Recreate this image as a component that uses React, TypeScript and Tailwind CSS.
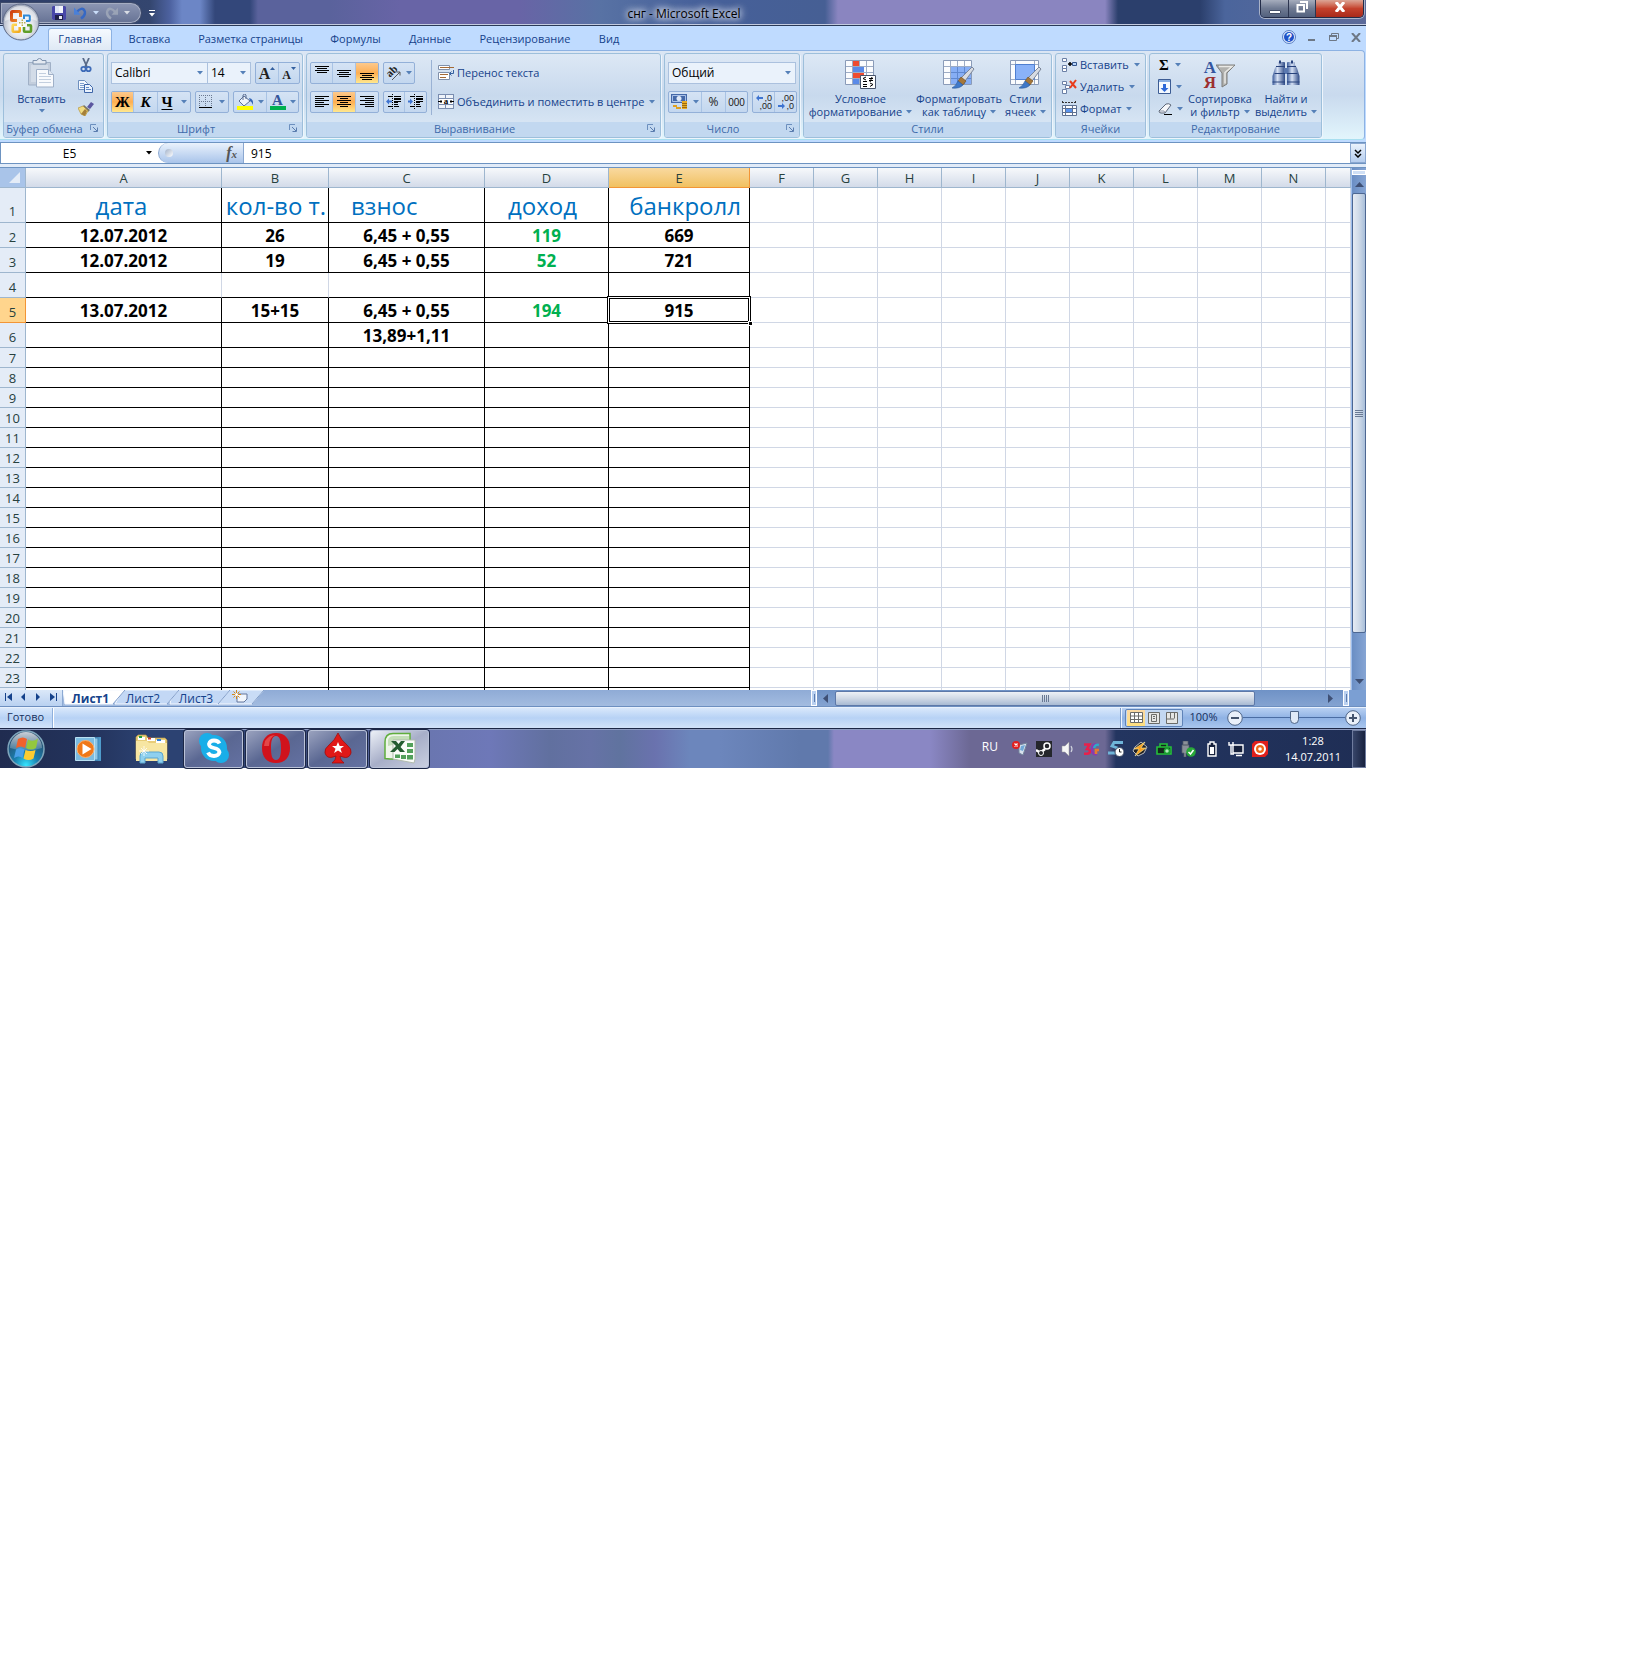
import React from "react";
import type { ReactNode } from "react";

const Arrow = ({ color = "#5580b8" }: { color?: string }) => (
  <svg width="6" height="4" viewBox="0 0 6 4" className="shrink-0" aria-hidden="true">
    <path d="M0 0h6L3 3.5z" fill={color} />
  </svg>
);

/* ---------- ribbon drawings ---------- */

const LogoIcon = () => (
  <svg width="38" height="38" viewBox="0 0 38 38" aria-hidden="true">
    <defs>
      <radialGradient id="orb" cx="50%" cy="60%" r="55%">
        <stop offset="0" stopColor="#ffffff" />
        <stop offset="0.6" stopColor="#e3e6ec" />
        <stop offset="1" stopColor="#a4acbd" />
      </radialGradient>
      <linearGradient id="lgR" gradientUnits="userSpaceOnUse" x1="8" y1="7" x2="20" y2="19">
        <stop offset="0" stopColor="#c8300a" />
        <stop offset="1" stopColor="#f8a030" />
      </linearGradient>
      <linearGradient id="lgY" gradientUnits="userSpaceOnUse" x1="10" y1="21" x2="19" y2="30">
        <stop offset="0" stopColor="#ffdf60" />
        <stop offset="1" stopColor="#f0a010" />
      </linearGradient>
    </defs>
    <circle cx="19" cy="19" r="18" fill="url(#orb)" stroke="#5f6b88" />
    <path d="M3 18a16 15 0 0 1 32 0c-8-4-24-4-32 0z" fill="#fff" opacity=".5" />
    <path d="M15 17.500h-4.500q-1 0-1-1V9.500q0-1 1-1h7q1 0 1 1V14" fill="none" stroke="url(#lgR)" strokeWidth="3" />
    <path d="M22 16v-3.500h5q.8 0 .8.800v3.900q0 .8-.8.800h-3" fill="none" stroke="#2e8ad8" strokeWidth="2" />
    <path d="M15 21.800h-3.500q-.8 0-.8.800v5.400q0 .8.800.8h5.400q.8 0 .8-.8V24" fill="none" stroke="url(#lgY)" strokeWidth="2.600" />
    <path d="M22 24v4q0 .8.800.8h5.400q.8 0 .8-.8v-5q0-.8-.8-.8H25" fill="none" stroke="#5f9e28" strokeWidth="2.600" />
    <path d="M17 19.700h7M20.300 16.500v7" stroke="#b8b050" strokeWidth="1.500" strokeDasharray="1.500 1" />
  </svg>
);

const SaveIcon = () => (
  <svg width="14" height="14" viewBox="0 0 14 14" aria-hidden="true">
    <path d="M0 1l1-1h12l1 1v12l-1 1H1.500L0 12.500z" fill="#4746a8" />
    <path d="M3 0h8v7H3z" fill="#f1f3fb" />
    <path d="M3 0h4v7H3z" fill="#dfe5f6" />
    <path d="M3 9h8v5H3z" fill="#20204a" />
    <path d="M7 10h3v3H7z" fill="#e9ecf5" />
  </svg>
);

const UndoIcon = ({ flip = false }: { flip?: boolean }) => (
  <svg width="13" height="14" viewBox="0 0 14 14" aria-hidden="true">
    <g transform={flip ? "translate(14 0) scale(-1 1)" : undefined}>
      <path d="M3 6C6 2 10 1 11.500 5c1 3-1 6-4 8" fill="none" stroke={flip ? "#9aa3b6" : "#3668c4"} strokeWidth="2.600" />
      <path d="M0 1v8h7z" fill={flip ? "#9aa3b6" : "#4a80d8"} />
    </g>
  </svg>
);

const PasteIcon = () => (
  <svg width="28" height="30" viewBox="0 0 28 30" aria-hidden="true">
    <path d="M.5 4.500h22V27H.5z" fill="#c3cedd" stroke="#a0b0c6" />
    <path d="M3 7h17v17H3z" fill="#d3dce8" />
    <path d="M5 2.500h4Q9.500.5 11.500.5t2.500 2h4V6H5z" fill="#e3e9f1" stroke="#7f93ae" />
    <path d="M8.500 11.500h12l5 5v12.500h-17z" fill="#f8fafd" stroke="#9fb0c8" />
    <path d="M20.500 11.500v5h5" fill="#dfe7f1" stroke="#9fb0c8" />
    <path d="M11 15.500h7M11 18.500h12M11 21.500h12M11 24.500h12" stroke="#c3cfdf" />
  </svg>
);

const CutIcon = () => (
  <svg width="14" height="15" viewBox="0 0 14 15" aria-hidden="true">
    <path d="M4 0l4 9M10 0L6 9" stroke="#5a6b88" strokeWidth="1.800" />
    <circle cx="4.500" cy="11" r="2.200" fill="none" stroke="#3f6cb8" strokeWidth="1.800" />
    <circle cx="9.500" cy="11" r="2.200" fill="none" stroke="#3f6cb8" strokeWidth="1.800" />
  </svg>
);

const CopyIcon = () => (
  <svg width="16" height="14" viewBox="0 0 16 14" aria-hidden="true">
    <path d="M.5.5h6l3 3v6h-9z" fill="#f4f8fe" stroke="#6d8fbe" />
    <path d="M2 3.500h4M2 5.500h6M2 7.500h6" stroke="#7ea0cf" />
    <path d="M6.500 4.500h5l3 3v5h-8z" fill="#eaf2fd" stroke="#3f66a8" />
    <path d="M8 7.500h3M8 9.500h5" stroke="#5f88c4" />
  </svg>
);

const BrushIcon = () => (
  <svg width="16" height="14" viewBox="0 0 16 14" aria-hidden="true">
    <path d="M9 5l4-5 3 2-4 5z" fill="#5b57a0" />
    <path d="M6 3l6 5-2 2-6-5z" fill="#77756c" />
    <path d="M0 6l5-2 5 5-3 5-4-2z" fill="#f0dc82" stroke="#b8953a" strokeWidth=".7" />
    <path d="M3 12l4-5 2 2-2 5z" fill="#a5803a" />
  </svg>
);

const Lines = ({ rows, y, step = 2 }: { rows: [number, number][]; y: number; step?: number }) => (
  <svg width="16" height="16" viewBox="0 0 16 16" aria-hidden="true">
    {rows.map(([x, w], i) => (
      <rect key={i} x={x} y={y + i * step} width={w} height="1" fill="#000" />
    ))}
  </svg>
);
const wide: [number, number][] = [[1, 14], [3, 10], [1, 14], [3, 10]];
const left: [number, number][] = [[1, 14], [1, 9], [1, 14], [1, 9], [1, 14], [1, 9]];
const center: [number, number][] = [[1, 14], [4, 8], [1, 14], [4, 8], [1, 14], [4, 8]];
const right: [number, number][] = [[1, 14], [6, 9], [1, 14], [6, 9], [1, 14], [6, 9]];

const IndentIcon = ({ out = false }: { out?: boolean }) => (
  <svg width="16" height="16" viewBox="0 0 16 16" aria-hidden="true">
    <path d="M2 2.500h4M8 2.500h7M8 4.500h7M8 7.500h7M8 10.500h4M2 12.500h4M8 12.500h5" stroke="#000" />
    <path d="M8 5.500h7M8 8.500h4" stroke="#000" />
    <path d="M6.500 0v16" stroke="#000" strokeDasharray="1 1" />
    {out ? <path d="M0 7.500l3-3v2h3v2H3v2z" fill="#3f74d0" /> : <path d="M5 7.500l-3-3v2H0v2h2v2z" fill="#3f74d0" />}
  </svg>
);

const OrientationIcon = () => (
  <svg width="16" height="16" viewBox="0 0 16 16" className="overflow-visible" aria-hidden="true">
    <text x="2" y="12" transform="rotate(-45 4 10)" fontFamily="Liberation Serif" fontSize="11" fontWeight="700" fill="#222">ab</text>
    <path d="M6 15L14 7M14 7h-3.500M14 7v3.500" stroke="#555" fill="none" />
  </svg>
);

const BordersIcon = () => (
  <svg width="14" height="14" viewBox="0 0 14 14" aria-hidden="true">
    <path d="M.5 0v12M6.500 0v12M12.500 0v12M0 .5h13M0 6.500h13" stroke="#6a7890" strokeDasharray="1 1" />
    <path d="M0 12.500h13" stroke="#000" />
  </svg>
);

const FillIcon = () => (
  <svg width="17" height="16" viewBox="0 0 17 16" aria-hidden="true">
    <path d="M7 2l6 5-6 5-5-5z" fill="#eef3fb" stroke="#5b6f92" />
    <path d="M6 6V1q2-2 3 0v4" fill="none" stroke="#5b6f92" />
    <path d="M12 4q5 1 4 7-1-3-3-4z" fill="#3668b8" />
    <path d="M0 12h16v4H0z" fill="#ffff00" />
  </svg>
);

const FontColorIcon = () => (
  <span className="flex h-4 w-4 flex-col items-center justify-end">
    <span className="font-['Liberation_Serif'] text-[15px] font-bold leading-3 text-[#34559a]">A</span>
    <span className="h-1 w-4 bg-[#00b050]" />
  </span>
);

const WrapIcon = () => (
  <svg width="16" height="16" viewBox="0 0 16 16" aria-hidden="true">
    <path d="M.5.5h11v4H.5zM.5 7.500h11v7H.5z" fill="#fff" stroke="#8090aa" />
    <path d="M2 2.500h14M2 9.500h8M2 12.500h6" stroke="#a56a35" />
    <path d="M15.500 5v3.500H12M13.500 6.500l-2 2 2 2" fill="none" stroke="#34609f" />
  </svg>
);

const MergeIcon = () => (
  <svg width="16" height="16" viewBox="0 0 16 16" aria-hidden="true">
    <path d="M0 0h16v15H0z" fill="#7a8db0" />
    <path d="M1 1h6v3H1zM8 1h7v3H8zM1 11h6v3H1zM8 11h7v3H8z" fill="#eef3fa" />
    <path d="M1 5h14v5H1z" fill="#fff" />
    <path d="M0 7.500h4M16 7.500h-4M3 6v3M13 6v3" stroke="#000" />
    <text x="8" y="10" textAnchor="middle" fontFamily="Liberation Serif" fontSize="9" fontWeight="700">a</text>
  </svg>
);

const MoneyIcon = () => (
  <svg width="17" height="16" viewBox="0 0 17 16" aria-hidden="true">
    <path d="M0 0h16v9H0z" fill="#4468a8" />
    <path d="M1.500 1.500h13v6h-13z" fill="none" stroke="#a9c1e8" />
    <circle cx="8" cy="4.500" r="2.500" fill="#dfe9f8" />
    <path d="M11 7h5v8h-5z" fill="#e8ab24" />
    <path d="M11 9.500h5M11 11.500h5M11 13.500h5" stroke="#9a6a10" />
    <path d="M2 11h4v2H2zM5 13h5v2H5z" fill="#e0a020" />
  </svg>
);

const DecimalIcon = ({ inc = false }: { inc?: boolean }) => (
  <svg width="18" height="18" viewBox="0 0 18 18" fontFamily="Liberation Sans" fontSize="9" fill="#222" aria-hidden="true">
    <text x="17" y="8" textAnchor="end">{inc ? ",0" : ",00"}</text>
    <text x="17" y="16" textAnchor="end">{inc ? ",00" : ",0"}</text>
    {inc ? <path d="M1 5l3-3v2h4v2H4v2z" fill="#3f74d0" /> : <path d="M8 13l-3-3v2H1v2h4v2z" fill="#3f74d0" />}
  </svg>
);

const GridBase = () => (
  <>
    <path d="M.5.500h28v24H.5z" fill="#fbfcfe" stroke="#8a9bb8" />
    <path d="M7.500 1v23M14.500 1v23M21.500 1v23M1 6.500h27M1 12.500h27M1 18.500h27" stroke="#9dacc5" />
  </>
);
const PaintBrush = () => (
  <>
    <path d="M29 7l2 2-9 12-4-3z" fill="#d7dbe2" stroke="#7b8699" />
    <path d="M18 17l5 4-3 4-5-4z" fill="#a5773a" stroke="#6d4b20" strokeWidth=".6" />
    <path d="M15 21l5 4q-4 4-11 3 4-2 6-7z" fill="#3f78c8" stroke="#2a5a9c" strokeWidth=".6" />
  </>
);
const ConditionalIcon = () => (
  <svg width="32" height="29" viewBox="0 0 32 29" aria-hidden="true">
    <GridBase />
    <path d="M8 1h6v5H8zM8 13h11v5H8z" fill="#ee4b30" />
    <path d="M8 7h11v5H8zM8 19h6v5H8z" fill="#5a8ae8" />
    <path d="M15.500 15.500h15v13h-15z" fill="#fff" stroke="#47546c" />
    <path d="M21 17l-3 1.500 3 1.500M18 21.500h4M18 24.500h4M18 26.500h4M24 18.500h4M24 20.500h4M27 17l-2 5M25 23l3 1.500-3 2" fill="none" stroke="#000" />
  </svg>
);
const FormatTableIcon = () => (
  <svg width="32" height="29" viewBox="0 0 32 29" aria-hidden="true">
    <GridBase />
    <path d="M8 7h20v17H8z" fill="#86aef5" />
    <path d="M14.500 7v17M21.500 7v17M8 12.500h20M8 18.500h20" stroke="#5f88d0" />
    <PaintBrush />
  </svg>
);
const CellStyleIcon = () => (
  <svg width="32" height="29" viewBox="0 0 32 29" aria-hidden="true">
    <path d="M.5.500h28v24H.5z" fill="#fbfcfe" stroke="#8a9bb8" />
    <path d="M5.500 1v23M24.500 1v23M1 4.500h27M1 19.500h27" stroke="#9dacc5" />
    <path d="M5.500 4.500h19v15h-19z" fill="#8ab2f8" stroke="#4f7fd0" />
    <PaintBrush />
  </svg>
);

const InsertIcon = () => (
  <svg width="16" height="16" viewBox="0 0 16 16" aria-hidden="true">
    <path d="M1.500 1.500h4v3h-4zM1.500 8.500h4v3h-4zM1.500 11.500h4v3h-4z" fill="#fff" stroke="#6a7fa5" />
    <path d="M11.500 5.500h4v3h-4z" fill="#b8d4fa" stroke="#33558c" />
    <path d="M7 7h4M9 5v4" stroke="#000" strokeWidth="1.500" />
  </svg>
);
const DeleteIcon = () => (
  <svg width="16" height="16" viewBox="0 0 16 16" aria-hidden="true">
    <path d="M1.500 2.500h4v3h-4zM1.500 10.500h4v4h-4zM4.500 6.500h4v3h-4z" fill="#fff" stroke="#6a7fa5" />
    <path d="M9 2l6 7M15 1L9 9" stroke="#e83c1c" strokeWidth="2" />
  </svg>
);
const FormatIcon = () => (
  <svg width="16" height="16" viewBox="0 0 16 16" aria-hidden="true">
    <path d="M1.500 4.500h14v10h-14z" fill="#fff" stroke="#5e7192" />
    <path d="M4.500 4v11M11.500 4v11M1 7.500h15M1 11.500h15" stroke="#5e7192" />
    <path d="M5 8h6v3H5z" fill="#5a94ee" />
    <path d="M1.500 0v3M14.500 0v3M1 1.500h14" stroke="#333" strokeDasharray="2 1" />
  </svg>
);
const FillDownIcon = () => (
  <svg width="14" height="16" viewBox="0 0 14 16" aria-hidden="true">
    <path d="M.5.500h12v14H.5z" fill="#f4f9ff" stroke="#3c5c94" />
    <path d="M1 1h11v2H1z" fill="#88aee2" />
    <path d="M5 5h3v4h2.500l-4 4-4-4H5z" fill="#2c68d8" />
  </svg>
);
const EraserIcon = () => (
  <svg width="15" height="13" viewBox="0 0 15 13" aria-hidden="true">
    <path d="M1 8l7-7q3-1 5 1l-6 8H3q-2 0-2-2z" fill="#f6f7fa" stroke="#5d6778" />
    <path d="M2 8h4l1 2" fill="none" stroke="#8e98aa" />
    <path d="M6 11.500h8" stroke="#000" />
  </svg>
);
const SortIcon = () => (
  <span className="flex">
    <span className="flex w-3 flex-col items-center font-['Liberation_Serif'] text-[17px] font-bold leading-[15px]">
      <span className="text-[#34559f]">А</span>
      <span className="text-[#9c3030]">Я</span>
    </span>
    <svg width="20" height="28" viewBox="0 0 20 28" aria-hidden="true">
      <path d="M0 5h19l-8 8v11l-5 3V13z" fill="#b1b1ae" stroke="#7d7d7b" />
      <path d="M3 6.500h13l-7 6v11" fill="none" stroke="#e9e9e6" strokeWidth="1.500" />
    </svg>
  </span>
);
const FindIcon = () => (
  <svg width="28" height="27" viewBox="0 0 28 27" aria-hidden="true">
    <defs>
      <linearGradient id="bin" x1="0" x2="1">
        <stop offset="0" stopColor="#3c5c9c" />
        <stop offset=".4" stopColor="#d6e1f4" />
        <stop offset="1" stopColor="#2e4a86" />
      </linearGradient>
    </defs>
    <path d="M5 5V3q0-1 1-1h6q1 0 1 1v3l0 6v13H.5V16L3 8z" fill="url(#bin)" />
    <path d="M15 5V3q0-1 1-1h6q1 0 1 1v2l2 3 2.500 8v9H15z" fill="url(#bin)" />
    <path d="M12 8h4v6h-4z" fill="#5a78b0" />
    <path d="M4 6.500h9M15 6.500h9M2.500 13.500h10.500M15 13.500h10.500M.5 22h12.500M15 22h12.500" stroke="#27427c" />
    <path d="M7 2h2M19 2h2" stroke="#27427c" strokeWidth="3" />
  </svg>
);
const Launcher = ({ label }: { label: string }) => (
  <button type="button" aria-label={label} className="absolute right-[5px] top-0.5">
    <svg width="8" height="8" viewBox="0 0 8 8" aria-hidden="true">
      <path d="M.5 6V.5H6" fill="none" stroke="#6c8fbe" />
      <path d="M3 3l4 4M7.500 3.500v4h-4" stroke="#5a7cae" fill="none" />
    </svg>
  </button>
);

/* ---------- ribbon building blocks ---------- */

const Group = ({ title, className, launcher, children }: { title: string; className: string; launcher?: boolean; children: ReactNode }) => (
  <section
    aria-label={title}
    className={
      "flex h-[85px] shrink-0 flex-col overflow-hidden rounded-[3px] border border-[#9dbfdb] bg-linear-to-b from-[#dde8f5] via-[#c8d9ed] to-[#deebf7] shadow-[1px_1px_0_#eef5fc] " +
      className
    }
  >
    <div className="flex h-[68px] px-[3px]">{children}</div>
    <h2 className={"relative flex h-[15px] items-center justify-center whitespace-nowrap bg-[#c2d8f0] text-[11px] text-[#3e6aaa] " + (launcher ? "pr-[18px]" : "")}>
      {title}
      {launcher && <Launcher label={title} />}
    </h2>
  </section>
);

const Bar = ({ children }: { children: ReactNode }) => (
  <div className="flex h-[22px] divide-x divide-[#a9c3e4] overflow-hidden rounded-[2px] border border-[#93b0d8] bg-linear-to-b from-[#d5e3f4] to-[#c3d7ef]">{children}</div>
);
const Btn = ({ label, on, className = "w-[22px]", children }: { label: string; on?: boolean; className?: string; children: ReactNode }) => (
  <button
    type="button"
    aria-label={label}
    className={
      "flex shrink-0 items-center justify-center " +
      (on ? "bg-linear-to-b from-[#fcc98c] via-[#fdae50] to-[#ffe88e] " : "") +
      className
    }
  >
    {children}
  </button>
);
const BigBtn = ({ icon, a, b, className }: { icon: ReactNode; a: string; b: string; className: string }) => (
  <button type="button" className={"flex flex-col items-center pt-1.5 text-[11px] leading-[13px] text-[#15428b] " + className}>
    <span className="flex h-8 items-start">{icon}</span>
    <span>{a}</span>
    <span className="flex items-center gap-1 whitespace-nowrap">
      {b}
      <Arrow />
    </span>
  </button>
);
const SmallBtn = ({ icon, text }: { icon: ReactNode; text: string }) => (
  <button type="button" className="flex h-[22px] items-center gap-[3px] whitespace-nowrap text-[11px] text-[#15428b]">
    {icon}
    <span className="pr-0.5">{text}</span>
    <Arrow />
  </button>
);
const Combo = ({ label, value, className }: { label: string; value: string; className: string }) => (
  <label className={"relative flex h-[22px] items-center border border-[#abc1de] bg-[#eaf2fb] " + className}>
    <select aria-label={label} className="w-full appearance-none pl-[3px] text-xs text-black outline-none">
      <option>{value}</option>
    </select>
    <span className="pointer-events-none absolute right-1">
      <Arrow />
    </span>
  </label>
);

const tabs = [
  ["Вставка", "ml-[3px] w-[69px]"],
  ["Разметка страницы", "w-[133px]"],
  ["Формулы", "w-[77px]"],
  ["Данные", "w-[72px]"],
  ["Рецензирование", "w-[118px]"],
  ["Вид", "w-[50px]"],
];

const TitleBar = () => (
  <header className="relative flex h-[26px] items-center justify-center border-b border-[#2a3a58] bg-[linear-gradient(90deg,#2c3c66_0px,#34466f_150px,#4d62a0_170px,#6c86c6_182px,#6c86c6_200px,#33477a_215px,#33477a_250px,#5a629c_258px,#5a629c_330px,#6864a6_400px,#6864a6_520px,#5872a4_600px,#46609a_700px,#465f94_825px,#8a85c0_838px,#8a85c0_1105px,#2b3f6c_1118px,#2b3f6c_1200px,#4b659c_1225px,#5c6a9a_100%)] shadow-[inset_0_-1px_0_#c3cbe0]">
    <div className="absolute left-0 top-0.5 flex h-[22px] w-[142px] items-center rounded-r-full border border-[#3d4a6a] bg-linear-to-b from-[#8d97b4] to-[#667294] pl-[51px] shadow-[inset_0_0_0_1px_#a5adc2]">
      <button type="button" aria-label="Сохранить"><SaveIcon /></button>
      <button type="button" aria-label="Отменить" className="ml-2 flex items-center gap-1.5"><UndoIcon /><Arrow color="#c9dcf8" /></button>
      <button type="button" aria-label="Вернуть" className="ml-1.5 flex items-center gap-1.5"><UndoIcon flip /><Arrow color="#d8dce4" /></button>
    </div>
    <button type="button" aria-label="Настройка панели" className="absolute left-[149px] top-2.5 flex flex-col items-center gap-0.5">
      <span className="h-px w-1.5 bg-white" />
      <Arrow color="#fff" />
    </button>
    <h1 className="pl-0.5 pt-0.5 text-xs text-black [text-shadow:0_0_6px_#fff,0_0_8px_#fff,0_0_10px_#d8def0]">снг - Microsoft Excel</h1>
    <div className="absolute right-0.5 top-0 flex h-[18px] divide-x divide-[#2c3550] overflow-hidden rounded-b-[5px] border border-t-0 border-[#232c48] shadow-[0_0_0_1px_#a9b2c8]">
      <button type="button" aria-label="Свернуть" className="flex w-7 items-center justify-center bg-linear-to-b from-[#a6adbd] via-[#6f7a92] to-[#53617e]">
        <span className="mt-1.5 h-1 w-3 rounded-[1px] border border-[#444f68] bg-white" />
      </button>
      <button type="button" aria-label="Развернуть" className="flex w-[27px] items-center justify-center bg-linear-to-b from-[#a6adbd] via-[#6f7a92] to-[#53617e] pb-1">
        <svg width="12" height="12" viewBox="0 0 12 12" aria-hidden="true">
          <path d="M4 1h7v7M1.500 4h6.500v6.500H1.500z" fill="none" stroke="#fff" strokeWidth="2" />
        </svg>
      </button>
      <button type="button" aria-label="Закрыть" className="flex w-[47px] items-center justify-center bg-linear-to-b from-[#dba596] via-[#c4412c] to-[#a8291a] pb-1">
        <svg width="12" height="10" viewBox="0 0 12 10" aria-hidden="true">
          <path d="M2 0l8 10M10 0L2 10" stroke="#fff" strokeWidth="3" />
        </svg>
      </button>
    </div>
    <button type="button" aria-label="Office" className="absolute left-0.5 top-[3px] z-20"><LogoIcon /></button>
  </header>
);

const Ribbon = () => (
  <div className="border-b border-[#6d93c1] bg-[#bfdbff] pb-0.5">
    <nav className="flex h-6 items-end pl-12 text-xs text-[#15428b]">
      <button type="button" className="flex h-[22px] w-16 items-center justify-center rounded-t-[3px] border border-b-0 border-[#8db2e3] bg-linear-to-b from-[#f5faff] to-[#dfe9f5] text-[11px]">Главная</button>
      {tabs.map(([t, w]) => (
        <button type="button" key={t} className={"flex h-[22px] items-center justify-center whitespace-nowrap text-[11px] " + w}>{t}</button>
      ))}
      <div className="ml-auto flex h-6 items-center gap-3 pb-0.5 pr-[5px]">
        <button type="button" aria-label="Справка">
          <svg width="14" height="14" viewBox="0 0 14 14" aria-hidden="true">
            <circle cx="7" cy="7" r="6.500" fill="#dce8fb" stroke="#5a7fc4" />
            <circle cx="7" cy="7" r="5" fill="#1f52c8" />
            <text x="7" y="11" textAnchor="middle" fontFamily="Liberation Sans" fontSize="10" fontWeight="700" fill="#fff">?</text>
          </svg>
        </button>
        <button type="button" aria-label="Свернуть книгу" className="h-2 w-[7px] border-b-2 border-[#6e7886]" />
        <button type="button" aria-label="Восстановить книгу" className="ml-0.5">
          <svg width="10" height="8" viewBox="0 0 10 8" aria-hidden="true">
            <path d="M2.500 2V.5h7v5H8M.5 2.500h7v5h-7z" fill="none" stroke="#6e7886" />
            <path d="M0 2h8v2H0z" fill="#6e7886" />
          </svg>
        </button>
        <button type="button" aria-label="Закрыть книгу">
          <svg width="10" height="9" viewBox="0 0 10 9" aria-hidden="true">
            <path d="M1 0l8 9M9 0L1 9" stroke="#6e7886" strokeWidth="2" />
          </svg>
        </button>
      </div>
    </nav>
    <div className="mr-px flex h-[90px] gap-[3px] overflow-hidden rounded-r-[4px] border-y border-r border-t-[#8db2e3] border-r-[#8db2e3] border-b-[#a8dff0] bg-linear-to-b from-[#dbe6f4] via-[#c9daee] to-[#e2f5fc] pl-[3px] pt-[2px]">
      <Group title="Буфер обмена" className="w-[101px]" launcher>
        <button type="button" className="flex w-[69px] flex-col items-center pt-1 text-[11px] leading-[13px] text-[#15428b]">
          <PasteIcon />
          <span className="mb-1 mt-1">Вставить</span>
          <Arrow />
        </button>
        <div className="flex flex-col">
          <Btn label="Вырезать" className="h-[22px] w-5"><CutIcon /></Btn>
          <Btn label="Копировать" className="h-[22px] w-5"><CopyIcon /></Btn>
          <Btn label="Формат по образцу" className="h-[22px] w-5"><BrushIcon /></Btn>
        </div>
      </Group>
      <Group title="Шрифт" className="w-[196px]" launcher>
        <div className="flex flex-col gap-[7px] pt-2">
          <div className="flex">
            <Combo label="Шрифт" value="Calibri" className="w-[97px]" />
            <Combo label="Размер" value="14" className="mr-1 w-[43px] border-l-0" />
            <Bar>
              <Btn label="Увеличить размер" className="w-[23px]">
                <span className="pt-0.5 font-['Liberation_Serif'] text-base font-bold leading-4 text-[#222]">A</span>
                <svg width="5" height="12" viewBox="0 0 5 12" aria-hidden="true"><path d="M0 3h5L2.500 0z" fill="#34609f" /></svg>
              </Btn>
              <Btn label="Уменьшить размер" className="w-5">
                <span className="pt-1 font-['Liberation_Serif'] text-xs font-bold leading-3 text-[#222]">A</span>
                <svg width="5" height="12" viewBox="0 0 5 12" aria-hidden="true"><path d="M0 0h5L2.500 3z" fill="#34609f" /></svg>
              </Btn>
            </Bar>
          </div>
          <div className="flex gap-1">
            <Bar>
              <Btn label="Полужирный" on><b className="font-['Liberation_Serif'] text-[15px] leading-5 text-black">Ж</b></Btn>
              <Btn label="Курсив" className="w-6"><b className="font-['Liberation_Serif'] text-[15px] italic leading-5 text-black">К</b></Btn>
              <Btn label="Подчеркнутый" className="w-8 gap-2"><b className="font-['Liberation_Serif'] text-[15px] leading-5 text-black underline underline-offset-2">Ч</b><Arrow /></Btn>
            </Bar>
            <Bar><Btn label="Границы" className="w-8 gap-1.5"><BordersIcon /><Arrow /></Btn></Bar>
            <Bar>
              <Btn label="Цвет заливки" className="w-[33px] gap-1"><FillIcon /><Arrow /></Btn>
              <Btn label="Цвет текста" className="w-[31px] gap-1"><FontColorIcon /><Arrow /></Btn>
            </Bar>
          </div>
        </div>
      </Group>
      <Group title="Выравнивание" className="w-[355px]" launcher>
        <div className="flex flex-col gap-[7px] pt-2">
          <div className="flex gap-1">
            <Bar>
              <Btn label="По верхнему краю"><Lines rows={wide} y={1} /></Btn>
              <Btn label="По середине" className="w-[23px]"><Lines rows={wide} y={5} /></Btn>
              <Btn label="По нижнему краю" on><Lines rows={wide} y={8} /></Btn>
            </Bar>
            <Bar><Btn label="Ориентация" className="w-[30px] gap-1"><OrientationIcon /><Arrow /></Btn></Bar>
          </div>
          <div className="flex gap-1">
            <Bar>
              <Btn label="По левому краю"><Lines rows={left} y={2} /></Btn>
              <Btn label="По центру" on className="w-[23px]"><Lines rows={center} y={2} /></Btn>
              <Btn label="По правому краю"><Lines rows={right} y={2} /></Btn>
            </Bar>
            <Bar>
              <Btn label="Уменьшить отступ" className="w-[21px]"><IndentIcon out /></Btn>
              <Btn label="Увеличить отступ" className="w-[21px]"><IndentIcon /></Btn>
            </Bar>
          </div>
        </div>
        <div className="ml-1 mr-1.5 mt-1.5 h-[55px] border-l border-[#9ab2d4] shadow-[inset_1px_0_0_#fff]" />
        <div className="flex flex-col items-start gap-[7px] pt-2">
          <button type="button" className="flex h-[22px] items-center gap-[3px] whitespace-nowrap text-[11px] text-[#15428b]"><WrapIcon />Перенос текста</button>
          <SmallBtn icon={<MergeIcon />} text="Объединить и поместить в центре" />
        </div>
      </Group>
      <Group title="Число" className="w-[136px]" launcher>
        <div className="flex flex-col gap-[7px] pt-2">
          <Combo label="Числовой формат" value="Общий" className="w-32" />
          <div className="flex gap-1">
            <Bar>
              <Btn label="Финансовый формат" className="w-[33px] gap-[5px]"><MoneyIcon /><Arrow /></Btn>
              <Btn label="Процентный формат" className="w-6"><span className="text-xs text-[#222]">%</span></Btn>
              <Btn label="Формат с разделителями" className="w-[21px]"><span className="font-['Liberation_Sans'] text-[10px] text-[#222]">000</span></Btn>
            </Bar>
            <Bar>
              <Btn label="Увеличить разрядность"><DecimalIcon inc /></Btn>
              <Btn label="Уменьшить разрядность" className="w-[21px]"><DecimalIcon /></Btn>
            </Bar>
          </div>
        </div>
      </Group>
      <Group title="Стили" className="w-[249px]">
        <BigBtn icon={<ConditionalIcon />} a="Условное" b="форматирование" className="w-[107px]" />
        <BigBtn icon={<FormatTableIcon />} a="Форматировать" b="как таблицу" className="w-[90px]" />
        <BigBtn icon={<CellStyleIcon />} a="Стили" b="ячеек" className="w-[43px]" />
      </Group>
      <Group title="Ячейки" className="w-[91px]">
        <div className="flex flex-col items-start pl-0.5">
          <SmallBtn icon={<InsertIcon />} text="Вставить" />
          <SmallBtn icon={<DeleteIcon />} text="Удалить" />
          <SmallBtn icon={<FormatIcon />} text="Формат" />
        </div>
      </Group>
      <Group title="Редактирование" className="w-[173px]">
        <div className="flex w-8 flex-col items-start pl-[3px]">
          <Btn label="Сумма" className="h-[22px] w-7 gap-1.5"><span className="font-['Liberation_Serif'] text-[15px] font-bold text-black">Σ</span><Arrow /></Btn>
          <Btn label="Заполнить" className="h-[22px] w-7 gap-1"><FillDownIcon /><Arrow /></Btn>
          <Btn label="Очистить" className="h-[22px] w-7 gap-1"><EraserIcon /><Arrow /></Btn>
        </div>
        <BigBtn icon={<SortIcon />} a="Сортировка" b="и фильтр" className="w-[70px]" />
        <BigBtn icon={<FindIcon />} a="Найти и" b="выделить" className="w-[62px]" />
      </Group>
    </div>
  </div>
);

const FormulaBar = () => (
  <div className="border-b border-[#6d93c1] bg-[#e1ebf8] pb-[3px]">
    <div className="flex h-[21px] items-stretch border-b border-[#6d93c1] bg-white">
      <div className="flex w-[158px] items-center border-l border-[#6d93c1] pr-1.5">
        <input aria-label="Имя" defaultValue="E5" className="w-[137px] bg-transparent pt-px text-center text-xs text-black outline-none" />
        <button type="button" aria-label="Список имён" className="ml-auto"><Arrow color="#000" /></button>
      </div>
      <div className="flex w-[86px] items-center justify-between rounded-l-full border-x border-[#8aa7d0] bg-linear-to-b from-[#eaf2fc] to-[#a9c4ea] pl-1.5 pr-1.5">
        <span className="size-2 rounded-full bg-linear-to-br from-[#a3b2c9] to-white" />
        <button type="button" aria-label="Вставить функцию" className="font-['Liberation_Serif'] text-base font-bold italic leading-none text-[#555]">
          f<span className="text-[11px]">x</span>
        </button>
      </div>
      <input aria-label="Строка формул" defaultValue="915" className="min-w-0 grow pl-[7px] pt-px text-xs text-black outline-none" />
      <button type="button" aria-label="Развернуть строку формул" className="flex w-4 items-center justify-center border border-[#8aa7d0] bg-linear-to-b from-[#eaf2fc] to-[#b5cdee]">
        <svg width="8" height="9" viewBox="0 0 8 9" aria-hidden="true"><path d="M1 1l3 3 3-3M1 5l3 3 3-3" fill="none" stroke="#000" strokeWidth="1.500" /></svg>
      </button>
    </div>
  </div>
);

/* ---------- worksheet ---------- */

const letters = ["A", "B", "C", "D", "E", "F", "G", "H", "I", "J", "K", "L", "M", "N", ""];
const data: Record<number, string[]> = {
  1: ["дата", "кол-во т.", "взнос", "доход", "банкролл"],
  2: ["12.07.2012", "26", "6,45 + 0,55", "119", "669"],
  3: ["12.07.2012", "19", "6,45 + 0,55", "52", "721"],
  5: ["13.07.2012", "15+15", "6,45 + 0,55", "194", "915"],
  6: ["", "", "13,89+1,11", "", ""],
};
const headAlign = ["text-center pr-1", "text-center pl-0.5", "pl-[22px]", "text-center pr-2", "text-right pr-2"];
const rowNumbers = Array.from({ length: 24 }, (_, i) => i + 1);

const rowHeight = (r: number) => (r === 1 ? "h-[35px]" : r <= 6 ? "h-[25px]" : r === 24 ? "h-0.5" : "h-5");
const rowHeadPad = (r: number) => (r === 1 ? "pb-0.5" : r <= 6 ? "pb-px" : "");

const Sheet = () => (
  <table className="w-full table-fixed border-separate border-spacing-0 bg-white">
    <colgroup>
      <col className="w-[26px]" />
      <col className="w-[196px]" />
      <col className="w-[107px]" />
      <col className="w-[156px]" />
      <col className="w-[124px]" />
      <col className="w-[141px]" />
      {letters.slice(5, 14).map((l) => (
        <col key={l} className="w-16" />
      ))}
      <col />
    </colgroup>
    <thead>
      <tr className="h-5">
        <th className="border-b border-r border-[#9eb6ce] bg-[#a9c4e9] p-0">
          <svg width="12" height="12" viewBox="0 0 12 12" className="ml-auto mr-1" aria-hidden="true"><path d="M11 0v11H0z" fill="#e4ecf7" /></svg>
        </th>
        {letters.map((l, i) => (
          <th
            key={i}
            scope="col"
            className={
              "border-b border-r p-0 text-[13px] font-normal leading-[18px] text-[#27413e] " +
              (l === "E" ? "border-[#f29536] bg-linear-to-b from-[#f9d99f] to-[#f1c15f]" : "border-[#9eb6ce] bg-linear-to-b from-[#f7f9fb] to-[#d3dbe9]")
            }
          >
            {l}
          </th>
        ))}
      </tr>
    </thead>
    <tbody>
      {rowNumbers.map((r) => (
        <tr key={r} className={rowHeight(r)}>
          <th
            scope="row"
            className={
              "border-r px-0 pt-0 align-bottom text-[13px] font-normal leading-[18px] text-[#27413e] " +
              rowHeadPad(r) +
              (r === 24 ? " border-[#9eb6ce] bg-[#e4ecf7]" : r === 5 ? " border-b border-[#f29536] bg-[#ffd58d]" : " border-b border-[#9eb6ce] bg-[#e4ecf7]")
            }
          >
            {r < 24 ? r : null}
          </th>
          {letters.map((l, c) => {
            const inside = c < 5;
            const text = inside ? data[r]?.[c] : undefined;
            const light = r === 4 && c < 2;
            return (
              <td
                key={c}
                className={
                  "relative whitespace-nowrap border-r " +
                  (r === 24 ? "" : "border-b ") +
                  (light ? "border-b-black border-r-[#d0d7e5] " : inside ? "border-black " : "border-[#d0d7e5] ") +
                  (text ? "pt-0.5 " : "") +
                  (r === 1 && inside
                    ? "text-2xl leading-8 text-[#0070c0] " + headAlign[c]
                    : "text-center text-[17px] font-bold leading-[22px] " + (c === 3 ? "text-[#00b050]" : "text-black"))
                }
              >
                {text}
                {l === "E" && r === 5 && (
                  <div className="pointer-events-none absolute -inset-0.5 z-10 border border-black">
                    <div className="size-full border border-white">
                      <div className="size-full border border-black" />
                    </div>
                    <div className="absolute -bottom-[3px] -right-[3px] size-[5px] border border-white bg-black" />
                  </div>
                )}
              </td>
            );
          })}
        </tr>
      ))}
    </tbody>
  </table>
);

const VScroll = () => (
  <div className="flex w-[15px] shrink-0 flex-col items-center border-l border-[#9dbdec] bg-linear-to-r from-[#6a8ec4] to-[#86a5d4]">
    <div className="mt-0.5 h-[5px] w-3.5 border border-white bg-[#cfdff5]" />
    <button type="button" aria-label="Вверх" className="flex h-[18px] items-center">
      <svg width="9" height="5" viewBox="0 0 9 5" aria-hidden="true"><path d="M0 5h9L4.500 0z" fill="#3f5075" /></svg>
    </button>
    <div className="flex h-[440px] w-[14px] items-center justify-center rounded-[2px] border border-[#4d6792] bg-linear-to-r from-[#e6ebf3] via-[#cfdae8] to-[#a9bfda]">
      <div className="flex flex-col gap-px">
        {[0, 1, 2, 3].map((i) => (
          <span key={i} className="h-px w-2 bg-[#6a7a94]" />
        ))}
      </div>
    </div>
    <button type="button" aria-label="Вниз" className="mb-1.5 mt-auto">
      <svg width="9" height="5" viewBox="0 0 9 5" aria-hidden="true"><path d="M0 0h9L4.500 5z" fill="#3f5075" /></svg>
    </button>
  </div>
);

const NavIcon = ({ d, label }: { d: string; label: string }) => (
  <button type="button" aria-label={label}>
    <svg width="7" height="8" viewBox="0 0 7 8" aria-hidden="true"><path d={d} fill="#15428b" /></svg>
  </button>
);

const SheetTabs = () => (
  <div className="flex h-[17px] items-stretch border-b border-[#6d8fc0] bg-linear-to-b from-[#8fabd6] to-[#a3bce0]">
    <div className="flex w-[63px] items-center gap-2 border-r border-[#8ba9d3] bg-linear-to-b from-[#dbe8f9] to-[#b9d1f1] pb-0.5 pl-[5px]">
      <NavIcon label="Первый лист" d="M0 0h1v8H0zM7 0v8L2 4z" />
      <NavIcon label="Предыдущий лист" d="M5 0v8L1 4z" />
      <NavIcon label="Следующий лист" d="M1 0v8l4-4z" />
      <NavIcon label="Последний лист" d="M0 0v8l5-4zM6 0h1v8H6z" />
    </div>
    <div className="relative flex w-[202px]">
      <svg viewBox="0 0 202 16" className="absolute inset-0 h-4 w-[202px]" aria-hidden="true">
        <path d="M162 0h39l-12 14h-35z" fill="#c9dcf6" stroke="#f4f8fe" />
        <path d="M110 0h57l-12 14h-48z" fill="#c3d8f5" stroke="#f4f8fe" />
        <path d="M60 0h56l-12 14H52z" fill="#c3d8f5" stroke="#f4f8fe" />
        <path d="M0 0h62L50 14H2z" fill="#fff" stroke="#f4f8fe" />
        <path d="M62 0L50 14M116 0L104 14M167 0L155 14M201 0L189 14" stroke="#7f9dca" />
        <path d="M174 4h10v5l-3 3h-7z" fill="#f2f6fc" stroke="#64779c" />
        <path d="M173.500 0v9M169 4.500h9M170.500 1.500l6 6M176.500 1.500l-6 6" stroke="#d48a1c" />
        <circle cx="173.500" cy="4.500" r="1.500" fill="#fff" />
      </svg>
      <button type="button" className="relative w-[55px] text-center text-xs font-bold leading-[15px] text-[#15428b]">Лист1</button>
      <button type="button" className="relative w-[50px] text-center text-xs leading-[15px] text-[#15428b]">Лист2</button>
      <button type="button" className="relative w-[56px] text-center text-xs leading-[15px] text-[#15428b]">Лист3</button>
      <button type="button" aria-label="Вставить лист" className="relative grow" />
    </div>
    <div className="ml-auto flex w-[555px] items-center">
      <span className="flex h-full w-1.5 items-center justify-center border border-white bg-[#b9d0f0]"><span className="h-2 w-px bg-[#5d7cae]" /></span>
      <div className="flex h-full grow items-center justify-between bg-linear-to-b from-[#6f92c6] to-[#84a3d1] pl-1.5 pr-2.5">
        <button type="button" aria-label="Влево"><svg width="5" height="9" viewBox="0 0 5 9" aria-hidden="true"><path d="M5 0v9L0 4.500z" fill="#3f5075" /></svg></button>
        <div className="ml-[7px] mr-auto flex h-[15px] w-[420px] items-center justify-center gap-px rounded-[2px] border border-[#5d78a8] bg-linear-to-b from-[#eef1f6] via-[#cfd8e5] to-[#a8bad3]">
          {[0, 1, 2, 3].map((i) => (
            <span key={i} className="h-[7px] w-px bg-[#6a7a94]" />
          ))}
        </div>
        <button type="button" aria-label="Вправо"><svg width="5" height="9" viewBox="0 0 5 9" aria-hidden="true"><path d="M0 0v9l5-4.500z" fill="#3f5075" /></svg></button>
      </div>
      <span className="flex h-full w-1.5 items-center justify-center border border-white bg-[#b9d0f0]"><span className="h-2 w-px bg-[#5d7cae]" /></span>
      <span className="h-full w-[17px] bg-[#7b9fd3]" />
    </div>
  </div>
);

const ViewBtn = ({ on, label, d }: { on?: boolean; label: string; d: string }) => (
  <button type="button" aria-label={label} className={"flex w-[18px] items-center justify-center " + (on ? "bg-linear-to-b from-[#fbd9a5] to-[#ffdf7d]" : "")}>
    <svg width="13" height="12" viewBox="0 0 13 12" aria-hidden="true"><path d={d} fill={on ? "#fff" : "#e6e6e4"} stroke="#6b6b68" /></svg>
  </button>
);
const ZoomBtn = ({ label, d }: { label: string; d: string }) => (
  <button type="button" aria-label={label}>
    <svg width="16" height="16" viewBox="0 0 16 16" aria-hidden="true">
      <circle cx="8" cy="8" r="7.300" fill="#e9f0fa" stroke="#4e6588" />
      <path d={d} stroke="#44546e" strokeWidth="2" />
    </svg>
  </button>
);

const StatusBar = () => (
  <div className="flex h-[21px] items-stretch border-t border-[#e8f1fd] bg-linear-to-b from-[#d9e8fb] via-[#b7d2f5] to-[#d2e3f9] text-[11px] text-[#15305e]">
    <div className="flex w-[53px] items-center border-r border-[#8fb0dc] pb-px pl-[7px] shadow-[1px_0_0_#fff]">Готово</div>
    <div className="ml-auto flex w-[246px] items-center border-l border-[#7b9ccc] bg-linear-to-b from-[#b8d0f2] via-[#8fb2e4] to-[#a9c6ee] pb-px pl-1 shadow-[inset_1px_0_0_#eef5fe]">
      <div className="flex h-[18px] rounded-[2px] border border-[#5f83b8] bg-[#c3d7f1] px-px">
        <ViewBtn on label="Обычный" d="M.5.500h12v10H.5zM4.500.5v10M8.500.5v10M.5 4h12M.5 7.500h12" />
        <ViewBtn label="Разметка страницы" d="M.5.500h11v11H.5zM3.500 2.500h5v7h-5zM5 4.500h2M5 6.500h2" />
        <ViewBtn label="Страничный" d="M.5.500h11v11H.5zM4.500.5v6M8.500.5v6M1 7h7" />
      </div>
      <button type="button" className="w-[41px] text-center">100%</button>
      <div className="flex grow items-center pl-[3px] pr-[5px]">
        <ZoomBtn label="Уменьшить" d="M4 8h8" />
        <input
          type="range"
          aria-label="Масштаб"
          min={0}
          max={100}
          defaultValue={50}
          className="h-px w-0 grow appearance-none bg-[#4a6da3] [&::-webkit-slider-thumb]:h-[13px] [&::-webkit-slider-thumb]:w-[9px] [&::-webkit-slider-thumb]:appearance-none [&::-webkit-slider-thumb]:rounded-b-[5px] [&::-webkit-slider-thumb]:border [&::-webkit-slider-thumb]:border-[#4e6588] [&::-webkit-slider-thumb]:bg-[#dfe9f7]"
        />
        <ZoomBtn label="Увеличить" d="M4 8h8M8 4v8" />
      </div>
    </div>
  </div>
);

/* ---------- taskbar ---------- */

const StartIcon = () => (
  <svg width="38" height="38" viewBox="0 0 38 38" aria-hidden="true">
    <defs>
      <radialGradient id="start" cx="50%" cy="95%" r="85%">
        <stop offset="0" stopColor="#35e6ff" />
        <stop offset=".4" stopColor="#1a7fae" />
        <stop offset="1" stopColor="#284868" />
      </radialGradient>
      <linearGradient id="gloss" x1="0" y1="0" x2="0" y2="1">
        <stop offset="0" stopColor="#fff" stopOpacity=".75" />
        <stop offset="1" stopColor="#fff" stopOpacity=".15" />
      </linearGradient>
    </defs>
    <circle cx="19" cy="19" r="18" fill="url(#start)" stroke="#7fa6bc" strokeWidth="1.500" />
    <path d="M3 18a16 16 0 0 1 32 0q-16 5-32 0z" fill="url(#gloss)" />
    <path d="M11 9q5-3 9 0l-2 9q-4-3-9 0z" fill="#f0622c" />
    <path d="M21 9.500q5 3 10-1l-2 9.500q-5 3-10 0z" fill="#93c83e" />
    <path d="M9 19.500q4-3 8.500 0l-2 8.500q-4-3-8.500 0z" fill="#4aa0e8" />
    <path d="M18.500 20q5 2 10 0l-2 8.500q-5 3-10 0z" fill="#fccc30" />
  </svg>
);
const PlayerIcon = () => (
  <svg width="27" height="26" viewBox="0 0 27 26" aria-hidden="true">
    <path d="M8 2l18-1v24L8 24z" fill="#4f9ccc" /><path d="M5 2h18v22H5z" fill="#8cc6e6" stroke="#3f85b5" />
    <path d="M.5 1.500h19v23H.5z" fill="#7cbce0" stroke="#b9e0f2" />
    <circle cx="10.500" cy="13" r="8.500" fill="#f07818" stroke="#f9b070" />
    <path d="M7.500 7.500v11l9-5.500z" fill="#fff" />
  </svg>
);
const FolderIcon = () => (
  <svg width="33" height="30" viewBox="0 0 33 30" aria-hidden="true">
    <path d="M1 3l2-2h8l2 3h17l2 2v19H1z" fill="#e8cd78" stroke="#b99a48" strokeWidth=".7" />
    <path d="M3 3h7v3H3zM12 4h8v3h-8zM21 6h9v3h-9z" fill="#fff" />
    <path d="M4 2h3v2H4z" fill="#20a040" /><path d="M13 3.500h3v2h-3z" fill="#d04030" /><path d="M22 5h4v2h-4z" fill="#3080d8" />
    <path d="M1 7h11l2 2h18v18H1z" fill="#f7e6a2" />
    <path d="M5 29v-7q0-4 4-4h15q4 0 4 4v7h-5v-5H10v5z" fill="#8fd0ee" stroke="#5aa5cf" />
    <path d="M9 12v10M4 17h10M6 14l6 6M12 14l-6 6" stroke="#fff" strokeOpacity=".8" />
  </svg>
);
const SkypeIcon = () => (
  <svg width="32" height="32" viewBox="0 0 32 32" aria-hidden="true">
    <circle cx="9" cy="9" r="8" fill="#19aee8" /><circle cx="23" cy="23" r="8" fill="#19aee8" /><circle cx="16" cy="16" r="13" fill="#19aee8" />
    <path d="M21.500 11.500q-1.500-3-5.500-3t-5 3.500q0 3 5 4t5.500 4.300q-1 3.700-5.500 3.700t-6-3.500" fill="none" stroke="#fff" strokeWidth="3.800" />
  </svg>
);
const OperaIcon = () => (
  <svg width="32" height="32" viewBox="0 0 32 32" aria-hidden="true">
    <path fillRule="evenodd" d="M16 1c9 0 14 6 14 15s-5 15-14 15S2 25 2 16 7 1 16 1zm0 3c-4 0-5 5-5 12s1 12 5 12 5-5 5-12-1-12-5-12z" fill="#d0121c" />
    <path d="M5 9q4-6 10-6-6 3-6 11H4z" fill="#f06a68" opacity=".6" />
  </svg>
);
const StarsIcon = () => (
  <svg width="28" height="32" viewBox="0 0 28 32" aria-hidden="true">
    <path d="M14 1q3 7 9 12 5 4 4 8-2 6-8 4l-3-1q0 4 4 7H8q4-3 4-7l-3 1q-6 2-8-4-1-4 4-8 6-5 9-12z" fill="#e01818" stroke="#a00c0c" strokeWidth=".8" />
    <path d="M14 10l1.700 4h4.300l-3.500 2.700 1.400 4.300-3.900-2.600-3.900 2.600 1.400-4.300L8 14h4.300z" fill="#fff" />
  </svg>
);
const ExcelIcon = () => (
  <svg width="32" height="32" viewBox="0 0 32 32" aria-hidden="true">
    <path d="M9 1.500h17v22q-6 5-25 3V10q0-8.500 8-8.500z" fill="#eef5ea" stroke="#5fae3c" strokeWidth="1.500" />
    <path d="M4 8q1-4 6-4h15v5L4 14z" fill="#c4dfb8" />
    <path d="M9 8h22v19l-1 4-21-4z" fill="#fafcf8" stroke="#b1bcae" />
    <path d="M23 11h6v4h-6zM23 17h6v4h-6zM23 23h6v4.500h-6zM17 23h5v4h-5zM11 22.500h5v3.500h-5z" fill="#52a05a" />
    <path d="M7 9h5l2.500 3L17 9h4l-4.500 6 4.500 5h-5l-2.500-3-3 3H6l6-6z" fill="#245c30" />
  </svg>
);

const TaskBtn = ({ label, active, children }: { label: string; active?: boolean; children: ReactNode }) => (
  <button
    type="button"
    aria-label={label}
    className={
      "flex h-[38px] w-[59px] items-center justify-center rounded-[3px] border border-[#bac2d8] pb-px shadow-[0_0_0_1px_#1c2746] " +
      (active ? "bg-linear-to-br from-[#ecf0f7] via-[#a7aec8] to-[#c9cfe0]" : "bg-linear-to-br from-[#9aa2be] via-[#5a6792] to-[#6471a2]")
    }
  >
    {children}
  </button>
);

const trayIcons: [string, ReactNode][] = [
  ["Устройство", <g key="a"><path d="M7 4l8-2-4 12-4-2z" fill="#d8e2ee" stroke="#73849c" /><path d="M9 5l4-1-2 6-3-1z" fill="#70a8d8" /><circle cx="4" cy="4" r="4" fill="#e02020" /><path d="M2.500 2.500l3 3M5.500 2.500l-3 3" stroke="#fff" strokeWidth="1.300" /></g>],
  ["Steam", <g key="b"><path d="M0 0h16v16H0z" fill="#24262b" /><circle cx="11" cy="5" r="3" fill="none" stroke="#fff" strokeWidth="1.500" /><path d="M9 8l-5 4M0 9l5 3" stroke="#fff" strokeWidth="2.500" /><circle cx="5" cy="12" r="2.500" fill="#24262b" stroke="#fff" /></g>],
  ["Громкость", <g key="c"><path d="M2 5h3l4-4v14l-4-4H2z" fill="#f6f6f6" stroke="#999" strokeWidth=".5" /><path d="M11 5q2 3 0 6" stroke="#d0d4de" strokeWidth="1.200" fill="none" /></g>],
  ["3G", <g key="d" fill="none" strokeWidth="2.600"><path d="M0 3.500h5.500L3 8q3 0 3 2.300T3 12.700H0" stroke="#e8204c" /><path d="M14 4q-6-2-6 4t5 5" stroke="#8a3ab0" /><path d="M15 4q-4-1-5 3" stroke="#30a8c8" /><path d="M15 9h-3v4" stroke="#e87830" /></g>],
  ["Синхронизация", <g key="e"><path d="M15 1.500H6L4 5l8 3-2 4H0" fill="none" stroke="#6fb4d8" strokeWidth="2.800" /><circle cx="11.500" cy="11" r="4.500" fill="#fff" stroke="#39455c" /><path d="M11.500 8v3h2" stroke="#222" fill="none" /></g>],
  ["Winamp", <g key="f"><path d="M3 6l6-5 6 5-3 6-6 3-5-5z" fill="#222" stroke="#ddd" strokeWidth=".8" /><path d="M13 1L2 8h5l-4 7 11-8H9z" fill="#f8a020" stroke="#fff0a0" strokeWidth=".6" /></g>],
  ["Видеокарта", <g key="g"><path d="M1 6h14v7H1zM4 3h7v3H4z" fill="#14261c" stroke="#25c03a" strokeWidth="1.600" /><circle cx="11" cy="10" r="2.500" fill="#b0e8b8" stroke="#18a030" strokeWidth="1.500" /></g>],
  ["Безопасное извлечение", <g key="h"><path d="M3 0h5v4H3zM2 4h7v8H6v4H4v-4H2z" fill="#8a9099" stroke="#555d69" strokeWidth=".7" /><circle cx="11" cy="11" r="4.800" fill="#28a838" /><path d="M8.500 11l2 2 3-4" stroke="#fff" strokeWidth="1.500" fill="none" /></g>],
  ["Батарея", <g key="i"><path d="M6 1h4v2h2v12H4V3h2z" fill="#17213c" stroke="#fff" strokeWidth="1.400" /><path d="M6 6h4v7H6z" fill="#fff" /></g>],
  ["Сеть", <g key="j"><path d="M5 4h10v8H5z" fill="#17213c" stroke="#fff" strokeWidth="1.400" /><path d="M8 14.500h6" stroke="#fff" strokeWidth="1.500" /><path d="M1 1v3h4V1M3 4v9h3" fill="none" stroke="#fff" strokeWidth="1.400" /></g>],
  ["Агент", <g key="k"><path d="M3 0h13v13l-3 3H0V3z" fill="#e0201c" /><circle cx="8" cy="8" r="6" fill="#fff" /><circle cx="8" cy="8" r="4" fill="#f06a18" /><circle cx="8" cy="8" r="1.800" fill="#fff" /></g>],
];

const Taskbar = () => (
  <footer className="flex h-10 items-center border-t border-[#1c2746] bg-[linear-gradient(90deg,#202c50_0px,#23335c_90px,#2c4272_150px,#2c4272_190px,#3a4a7c_300px,#6a76b0_430px,#6e78b8_490px,#61709f_550px,#6672a6_590px,#60739f_620px,#6a72ae_655px,#6c86bc_690px,#6c86bc_720px,#6079ac_800px,#6079ac_828px,#8a87c4_834px,#8a87c4_930px,#6c6894_970px,#6c6894_1105px,#233560_1116px,#1f2e55_100%)] pl-[7px] shadow-[inset_0_1px_0_#8f9cc0]">
    <button type="button" aria-label="Пуск"><StartIcon /></button>
    <button type="button" aria-label="Windows Media" className="ml-[30px]"><PlayerIcon /></button>
    <button type="button" aria-label="Проводник" className="ml-[33px] mr-4"><FolderIcon /></button>
    <div className="flex gap-[3px]">
      <TaskBtn label="Skype"><SkypeIcon /></TaskBtn>
      <TaskBtn label="Opera"><OperaIcon /></TaskBtn>
      <TaskBtn label="PokerStars"><StarsIcon /></TaskBtn>
      <TaskBtn label="Microsoft Excel" active><ExcelIcon /></TaskBtn>
    </div>
    <div className="ml-auto flex items-center">
      <span className="mb-1 mr-3.5 text-xs text-white">RU</span>
      <div className="flex gap-2">
        {trayIcons.map(([name, icon]) => (
          <button type="button" key={name} aria-label={name}>
            <svg width="16" height="16" viewBox="0 0 16 16" aria-hidden="true">{icon}</svg>
          </button>
        ))}
      </div>
      <div className="flex w-[84px] flex-col items-center pl-1.5 text-[11px] leading-4 text-white">
        <span>1:28</span>
        <span>14.07.2011</span>
      </div>
      <button type="button" aria-label="Показать рабочий стол" className="h-[38px] w-3.5 border border-[#6f7c9e] bg-linear-to-r from-[#38466a] to-[#18223f]" />
    </div>
  </footer>
);

export default function App() {
  return (
    <div className="min-h-screen bg-white">
      <main className="w-full max-w-[1366px] font-['Open_Sans','Noto_Sans',sans-serif]">
        <TitleBar />
        <Ribbon />
        <FormulaBar />
        <div className="flex">
          <div className="min-w-0 grow"><Sheet /></div>
          <VScroll />
        </div>
        <SheetTabs />
        <StatusBar />
        <Taskbar />
      </main>
    </div>
  );
}
